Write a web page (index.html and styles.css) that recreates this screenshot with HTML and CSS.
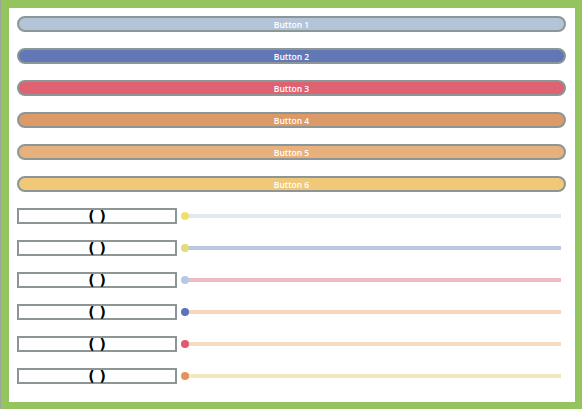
FILE: index.html
```html
<!DOCTYPE html>
<html>
<head>
<meta charset="utf-8">
<link rel="stylesheet" href="styles.css">
</head>
<body>
<div class="panel">
  <div class="btn b1">Button 1</div>
  <div class="btn b2">Button 2</div>
  <div class="btn b3">Button 3</div>
  <div class="btn b4">Button 4</div>
  <div class="btn b5">Button 5</div>
  <div class="btn b6">Button 6</div>
  <div class="row"><div class="box">( )</div><div class="slider"><span class="thumb t1"></span><span class="track k1"></span></div></div>
  <div class="row"><div class="box">( )</div><div class="slider"><span class="thumb t2"></span><span class="track k2"></span></div></div>
  <div class="row"><div class="box">( )</div><div class="slider"><span class="thumb t3"></span><span class="track k3"></span></div></div>
  <div class="row"><div class="box">( )</div><div class="slider"><span class="thumb t4"></span><span class="track k4"></span></div></div>
  <div class="row"><div class="box">( )</div><div class="slider"><span class="thumb t5"></span><span class="track k5"></span></div></div>
  <div class="row"><div class="box">( )</div><div class="slider"><span class="thumb t6"></span><span class="track k6"></span></div></div>
</div>
</body>
</html>
```
FILE: styles.css
```css
html, body { margin: 0; padding: 0; }
body {
  background: #94c45e;
  width: 582px;
  height: 409px;
  overflow: hidden;
  box-sizing: border-box;
  padding: 8px 7px 7px 8px;
  border-left: 1px solid #9aa49a;
}
.panel {
  background: #ffffff;
  height: 394px;
  box-sizing: border-box;
  padding: 8px 9px 0 8px;
  display: flex;
  flex-direction: column;
  gap: 16px;
}
.btn {
  height: 16px;
  box-sizing: border-box;
  border: 2px solid #8c9696;
  border-radius: 8px;
  color: #ffffff;
  font-family: "Open Sans", sans-serif;
  font-size: 8.5px;
  font-weight: 600;
  line-height: 13px;
  text-align: center;
}
.b1 { background: #b4c4d8; }
.b2 { background: #6278b6; }
.b3 { background: #de6272; }
.b4 { background: #dc9a68; }
.b5 { background: #e8b07c; }
.b6 { background: #f0c878; }
.row {
  height: 16px;
  display: flex;
  align-items: center;
}
.box {
  width: 160px;
  height: 16px;
  box-sizing: border-box;
  border: 2px solid #8c9696;
  font-family: "DejaVu Sans", sans-serif;
  font-weight: bold;
  font-size: 14px;
  line-height: 12px;
  text-align: center;
  color: #000;
}
.slider {
  flex: 1;
  display: flex;
  align-items: center;
  margin-left: 4px;
  margin-right: 5px;
}
.thumb {
  width: 8px;
  height: 8px;
  border-radius: 50%;
  position: relative;
  z-index: 1;
  flex: none;
}
.track {
  flex: 1;
  height: 4px;
  margin-left: -3px;
}
.t1 { background: #f0e070; }
.t2 { background: #e2dc7e; }
.t3 { background: #b8c8e2; }
.t4 { background: #5e74b8; }
.t5 { background: #de5a6c; }
.t6 { background: #e0945c; }
.k1 { background: #e2e8f0; }
.k2 { background: #bcc8e2; }
.k3 { background: #f0bcc4; }
.k4 { background: #f5d6be; }
.k5 { background: #f6dcc0; }
.k6 { background: #f6e6c0; }
```
